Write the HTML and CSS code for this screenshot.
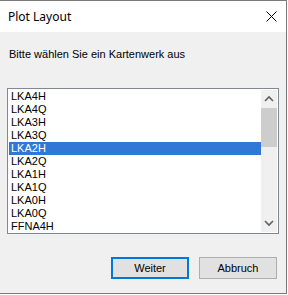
FILE: index.html
```html
<!DOCTYPE html>
<html lang="de">
<head>
  <meta charset="UTF-8">
  <title>Plot Layout</title>
  <link rel="stylesheet" href="styles.css">
</head>
<body>

<div class="window">
  <div class="titlebar">
    <span class="title">Plot Layout</span>
    <svg class="close" width="11" height="11" viewBox="0 0 11 11">
      <path d="M0.5 0.5 L10.5 10.5 M10.5 0.5 L0.5 10.5" stroke="#000" stroke-width="1" fill="none"/>
    </svg>
  </div>

  <div class="content">
    <p class="prompt">Bitte wählen Sie ein Kartenwerk aus</p>

    <div class="listbox">
      <ul class="items">
        <li>LKA4H</li>
        <li>LKA4Q</li>
        <li>LKA3H</li>
        <li>LKA3Q</li>
        <li class="selected">LKA2H</li>
        <li>LKA2Q</li>
        <li>LKA1H</li>
        <li>LKA1Q</li>
        <li>LKA0H</li>
        <li>LKA0Q</li>
        <li>FFNA4H</li>
      </ul>
      <div class="scrollbar">
        <div class="arrow">
          <svg width="16" height="17" viewBox="0 0 16 17">
            <path d="M4 11 L8 7 L12 11" stroke="#606060" stroke-width="1.6" fill="none"/>
          </svg>
        </div>
        <div class="track">
          <div class="thumb"></div>
        </div>
        <div class="arrow">
          <svg width="16" height="17" viewBox="0 0 16 17">
            <path d="M4 6 L8 10 L12 6" stroke="#606060" stroke-width="1.6" fill="none"/>
          </svg>
        </div>
      </div>
    </div>

    <div class="buttons">
      <button class="btn default">Weiter</button>
      <button class="btn">Abbruch</button>
    </div>
  </div>
</div>

</body>
</html>
```

FILE: styles.css
```css
body {
  margin: 0;
  padding: 0;
  background-color: #fff;
  font-family: "Liberation Sans", Arial, sans-serif;
  font-size: 11px;
  color: #000;
}

.window {
  box-sizing: border-box;
  width: 287px;
  height: 294px;
  border: 1px solid #7a7a7a;
  border-left: none;
  background-color: #f0f0f0;
  display: flex;
  flex-direction: column;
}

.titlebar {
  height: 31px;
  background-color: #fff;
  display: flex;
  align-items: center;
  justify-content: space-between;
  padding: 0 9px 0 8px;
}

.title {
  font-family: "Noto Sans", sans-serif;
  font-size: 12px;
  line-height: 16px;
  margin-top: 1px;
}

.close {
  display: block;
}

.content {
  flex: 1;
  display: flex;
  flex-direction: column;
  padding: 16px 8px 0 7px;
}

.prompt {
  margin: 0 0 0 2px;
  line-height: 13px;
}

.listbox {
  box-sizing: border-box;
  margin-top: 27px;
  width: 272px;
  height: 146px;
  border: 1px solid #828790;
  background-color: #fff;
  padding: 1px 1px 1px 1px;
  display: flex;
  overflow: hidden;
}

.items {
  list-style: none;
  margin: 0;
  padding: 0;
  flex: 1;
}

.items li {
  height: 13px;
  line-height: 13px;
  padding-left: 2px;
  white-space: nowrap;
}

.items li.selected {
  background-color: #3078d7;
  color: #fff;
}

.scrollbar {
  width: 16px;
  background-color: #f0f0f0;
  display: flex;
  flex-direction: column;
}

.arrow {
  height: 17px;
}

.arrow svg {
  display: block;
}

.track {
  flex: 1;
  padding-top: 1px;
}

.thumb {
  height: 39px;
  background-color: #cdcdcd;
}

.buttons {
  display: flex;
  justify-content: flex-end;
  gap: 10px;
  margin-top: 23px;
  margin-right: 1px;
}

.btn {
  box-sizing: border-box;
  width: 78px;
  height: 22px;
  border: 1px solid #adadad;
  background-color: #e1e1e1;
  font-family: "Liberation Sans", Arial, sans-serif;
  font-size: 11px;
  color: #000;
  padding: 0;
}

.btn.default {
  border: 2px solid #0078d7;
}
```
